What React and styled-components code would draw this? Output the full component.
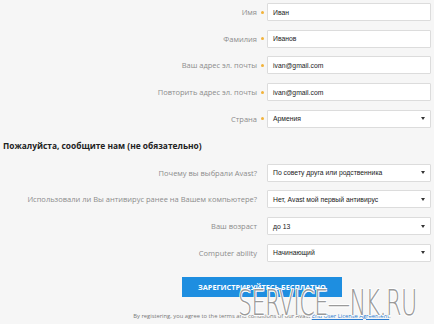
import React from 'react';
import styled, { createGlobalStyle } from 'styled-components';

const Global = createGlobalStyle`
  html, body {
    margin: 0;
    padding: 0;
    background: #f6f6f6;
  }
  body {
    font-family: "Open Sans", "Liberation Sans", sans-serif;
    -webkit-font-smoothing: antialiased;
  }
`;

const Page = styled.div`
  position: relative;
  width: 434px;
  height: 324px;
  overflow: hidden;
  padding-top: 3px;
  box-sizing: border-box;
`;

const Section = styled.div`
  display: flex;
  flex-direction: column;
  gap: 8.7px;
`;

const Row = styled.div`
  display: grid;
  grid-template-columns: 257px 10px 164px;
  align-items: center;
  height: 18px;
`;

const Label = styled.div`
  text-align: right;
  font-size: 7.5px;
  color: #8c8c8c;
  white-space: nowrap;
`;

const Dot = styled.span`
  justify-self: center;
  width: 3px;
  height: 3px;
  border-radius: 50%;
  background: ${p => (p.$on ? '#f2b23a' : 'transparent')};
`;

const Field = styled.div`
  display: flex;
  align-items: center;
  justify-content: space-between;
  height: 18px;
  box-sizing: border-box;
  padding: 0 5px 0 5px;
  background: #fff;
  border: 1px solid #dcdcdc;
  border-radius: 1px;
  font-family: "Liberation Sans", Arial, sans-serif;
  font-size: 6.8px;
  color: #222;
`;

const Caret = styled.span`
  width: 0;
  height: 0;
  border-left: 2px solid transparent;
  border-right: 2px solid transparent;
  border-top: 3px solid #333;
`;

const Heading = styled.h3`
  margin: 13px 0 13px 3px;
  height: 10px;
  font-size: 8.4px;
  line-height: 10px;
  font-weight: 700;
  color: #222;
`;

const Actions = styled.div`
  display: flex;
  flex-direction: column;
  align-items: center;
  padding-left: 90px;
  margin-top: 15px;
`;

const Button = styled.button`
  width: 160px;
  height: 20px;
  border: none;
  background: #1e8ee0;
  color: #fff;
  font-family: "Open Sans", "Liberation Sans", sans-serif;
  font-size: 7.3px;
  font-weight: 700;
  padding: 0;
`;

const Legal = styled.p`
  margin: 15px 0 0;
  font-size: 5.8px;
  color: #777;
  white-space: nowrap;

  & a {
    color: #2a7bd0;
    text-decoration: underline;
  }
`;

const Watermark = styled.div`
  position: absolute;
  left: 238px;
  top: 288px;
  font-family: "DejaVu Sans", sans-serif;
  font-weight: 200;
  font-size: 36px;
  line-height: 30px;
  color: #9a9a9a;
  letter-spacing: -1px;
  transform: scaleX(0.62);
  transform-origin: left top;
  text-shadow: 1px 1px 0 #fff, -1px -1px 0 #fff, 1px -1px 0 #fff, -1px 1px 0 #fff;
  white-space: nowrap;
  pointer-events: none;
`;

const required = [
  ['Имя', 'Иван'],
  ['Фамилия', 'Иванов'],
  ['Ваш адрес эл. почты', 'ivan@gmail.com'],
  ['Повторить адрес эл. почты', 'ivan@gmail.com'],
  ['Страна', 'Армения', true],
];

const optional = [
  ['Почему вы выбрали Avast?', 'По совету друга или родственника'],
  ['Использовали ли Вы антивирус ранее на Вашем компьютере?', 'Нет, Avast мой первый антивирус'],
  ['Ваш возраст', 'до 13'],
  ['Computer ability', 'Начинающий'],
];

const FormRow = ({ label, value, select, req }) => (
  <Row>
    <Label>{label}</Label>
    <Dot $on={req} />
    <Field>
      <span>{value}</span>
      {select && <Caret />}
    </Field>
  </Row>
);

export default function App() {
  return (
    <Page>
      <Global />
      <Section>
        {required.map(([l, v, s]) => (
          <FormRow key={l} label={l} value={v} select={s} req />
        ))}
      </Section>
      <Heading>Пожалуйста, сообщите нам (не обязательно)</Heading>
      <Section>
        {optional.map(([l, v]) => (
          <FormRow key={l} label={l} value={v} select />
        ))}
      </Section>
      <Actions>
        <Button>ЗАРЕГИСТРИРУЙТЕСЬ БЕСПЛАТНО</Button>
        <Legal>
          By registering, you agree to the terms and conditions of our Avast <a href="#">End User License Agreement</a>.
        </Legal>
      </Actions>
      <Watermark>SERVICE—NK.RU</Watermark>
    </Page>
  );
}
